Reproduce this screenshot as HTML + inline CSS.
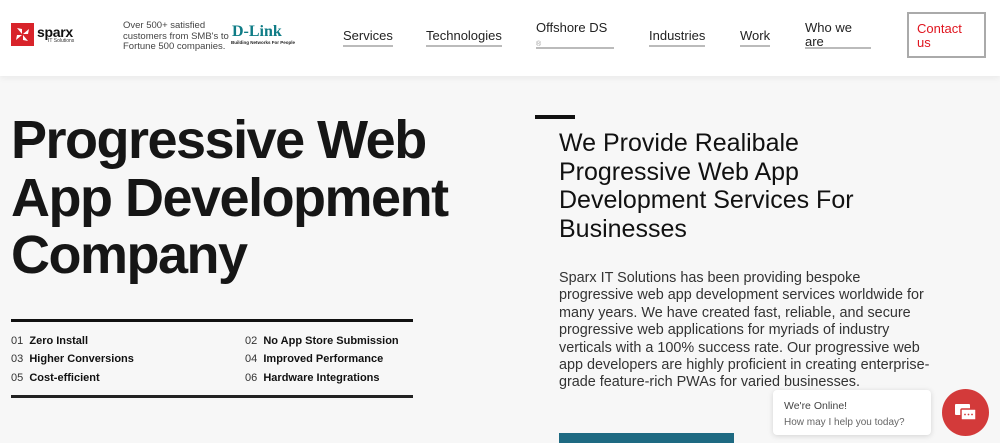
<!DOCTYPE html><html><head><style>
*{margin:0;padding:0;box-sizing:border-box}
body{width:1000px;height:441px;overflow:hidden;background:#f7f7f7;font-family:"Liberation Sans",sans-serif;position:relative;color:#111}
.hdr{position:absolute;left:0;top:0;width:1000px;height:76px;background:#fff;box-shadow:0 2px 6px rgba(0,0,0,.06)}
.a{position:absolute}
.nav{font-size:13px;color:#222;line-height:14px}
.nav span{position:absolute;border-bottom:2px solid #bbb;padding-bottom:2px}
h1{position:absolute;left:11px;top:112px;font-size:54px;line-height:57.5px;font-weight:900;letter-spacing:-1.5px;color:#161616}
.feat{position:absolute;left:11px;font-size:11px;font-weight:bold;color:#111}
.feat b{font-weight:normal;color:#333}
</style></head><body>
<div class="hdr">
 <div class="a" style="left:11px;top:23px;width:23px;height:23px;background:#d8232a"><svg width="23" height="23" viewBox="0 0 23 23"><g fill="#fff"><path d="M11 11 L6 5 L11 6Z"/><path d="M12 11 L18 6 L17 11Z"/><path d="M12 12 L17 18 L12 17Z"/><path d="M11 12 L5 17 L6 12Z"/></g></svg></div>
 <div class="a" style="left:37px;top:24px;font-size:14px;font-weight:bold;color:#111;letter-spacing:-.3px">sparx</div>
 <div class="a" style="left:48px;top:38px;font-size:5px;color:#333">IT Solutions</div>
 <div class="a" style="left:123px;top:21px;font-size:9.5px;line-height:10.5px;color:#444">Over 500+ satisfied<br>customers from SMB's to<br>Fortune 500 companies.</div>
 <div class="a" style="left:232px;top:23px;font-size:16px;font-weight:bold;color:#0f7c86;font-family:'Liberation Serif',serif">D-Link</div>
 <div class="a" style="left:231px;top:40px;font-size:4.5px;font-weight:bold;color:#222">Building Networks For People</div>
 <div class="nav">
  <span style="left:343px;top:29px">Services</span>
  <span style="left:426px;top:29px">Technologies</span>
  <span style="left:536px;top:21px;width:78px;height:28px">Offshore DS<br><small style="font-size:7px;color:#999">®</small></span>
  <span style="left:649px;top:29px">Industries</span>
  <span style="left:740px;top:29px">Work</span>
  <span style="left:805px;top:21px;width:66px;height:28px">Who we<br>are</span>
 </div>
 <div class="a" style="left:907px;top:12px;width:79px;height:46px;border:2px solid #aaa;color:#e0151f;font-size:13px;line-height:14px;padding:8px 0 0 8px">Contact<br>us</div>
</div>
<h1>Progressive Web<br>App Development<br>Company</h1>
<div class="a" style="left:11px;top:319px;width:402px;height:3px;background:#111"></div>
<div class="feat" style="top:335px"><b>01</b> &nbsp;Zero Install</div>
<div class="feat" style="top:353px"><b>03</b> &nbsp;Higher Conversions</div>
<div class="feat" style="top:372px"><b>05</b> &nbsp;Cost-efficient</div>
<div class="feat" style="left:245px;top:335px"><b>02</b> &nbsp;No App Store Submission</div>
<div class="feat" style="left:245px;top:353px"><b>04</b> &nbsp;Improved Performance</div>
<div class="feat" style="left:245px;top:372px"><b>06</b> &nbsp;Hardware Integrations</div>
<div class="a" style="left:11px;top:395px;width:402px;height:3px;background:#222"></div>
<div class="a" style="left:535px;top:115px;width:40px;height:4px;background:#111"></div>
<div class="a" style="left:559px;top:129px;font-size:25px;line-height:28.5px;color:#111;width:300px">We Provide Realibale Progressive Web App Development Services For Businesses</div>
<div class="a" style="left:559px;top:270px;width:378px;font-size:14.4px;line-height:17.4px;color:#333">Sparx IT Solutions has been providing bespoke progressive web app development services worldwide for many years. We have created fast, reliable, and secure progressive web applications for myriads of industry verticals with a 100% success rate. Our progressive web app developers are highly proficient in creating enterprise-grade feature-rich PWAs for varied businesses.</div>
<div class="a" style="left:559px;top:433px;width:175px;height:10px;background:#1e6a82"></div>
<div class="a" style="left:773px;top:390px;width:158px;height:45px;background:#fff;border-radius:4px;box-shadow:0 1px 6px rgba(0,0,0,.15);padding:8px 0 0 11px;font-size:10.5px;color:#444;line-height:16px">We're Online!<br><span style="font-size:10px;color:#666">How may I help you today?</span></div>
<div class="a" style="left:942px;top:389px;width:47px;height:47px;border-radius:50%;background:#d33a3a"><svg width="47" height="47"><rect x="13" y="15" width="15" height="11" rx="1" fill="#fff"/><rect x="19" y="20" width="15" height="11" rx="1" fill="#fff" stroke="#d33a3a" stroke-width="1.5"/><circle cx="23" cy="25.5" r=".9" fill="#d33a3a"/><circle cx="26.5" cy="25.5" r=".9" fill="#d33a3a"/><circle cx="30" cy="25.5" r=".9" fill="#d33a3a"/></svg></div>
</body></html>
